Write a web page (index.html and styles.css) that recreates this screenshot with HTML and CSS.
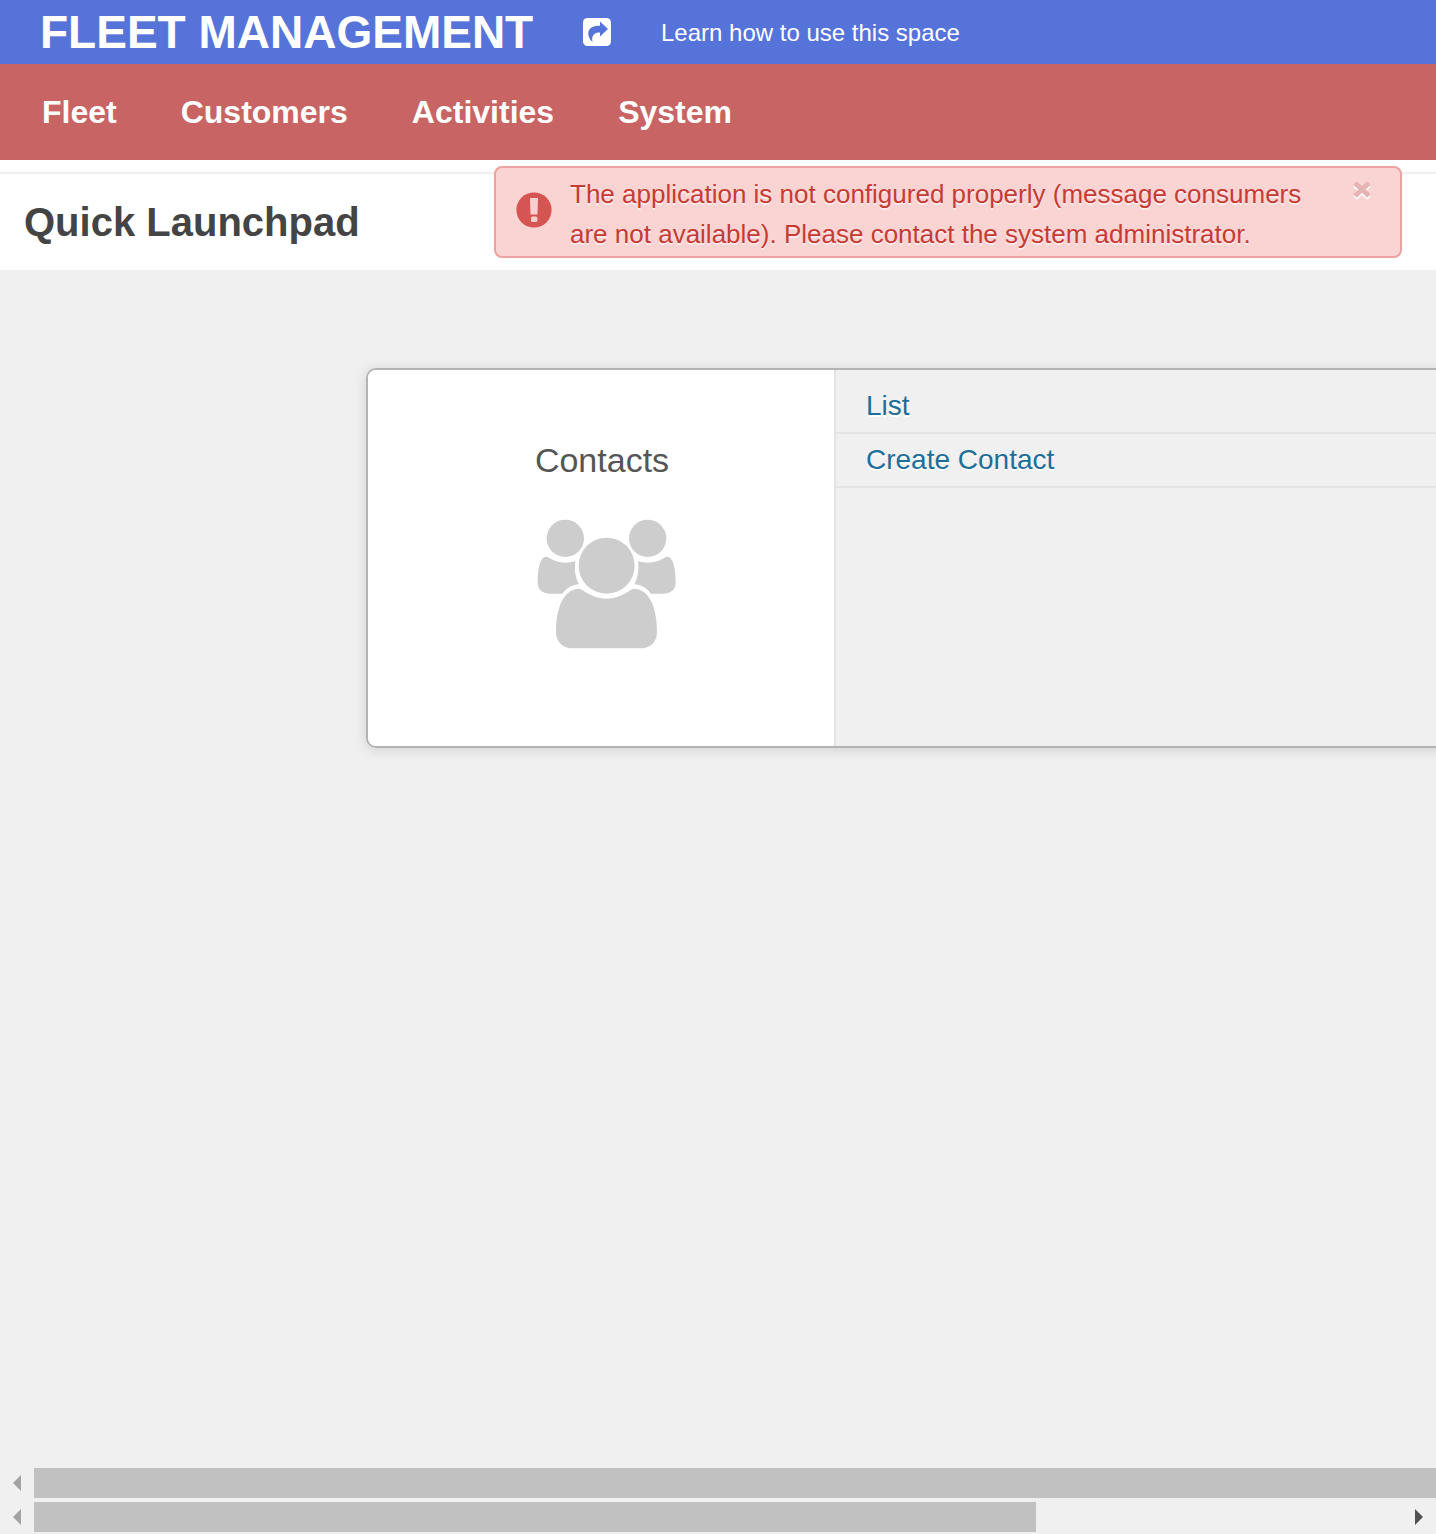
FILE: index.html
```
<!DOCTYPE html>
<html lang="en">
<head>
<meta charset="utf-8">
<title>Fleet Management</title>
<link rel="stylesheet" href="styles.css">
</head>
<body>
<div class="page">
  <header class="topbar">
    <h1 class="brand">FLEET MANAGEMENT</h1>
    <svg class="share" viewBox="0 0 28 28" aria-hidden="true">
      <rect width="28" height="28" rx="4.6" fill="#fff"/>
      <path d="M17 3.500 25 11 17 18.500V14.400C11.500 14.300 8.200 16.800 9.500 24.300 5.800 20.800 4.600 16.800 5.500 13.500 7 9.200 11 7.800 17 7.800Z" fill="#5673da"/>
    </svg>
    <a class="learn">Learn how to use this space</a>
  </header>
  <nav class="menu">
    <a>Fleet</a><a>Customers</a><a>Activities</a><a>System</a>
  </nav>
  <div class="heading">
    <h2>Quick Launchpad</h2>
    <div class="alert" role="alert">
      <svg class="alert-icon" viewBox="0 0 36 36" aria-hidden="true">
        <circle cx="18" cy="18" r="17.6" fill="#d55553"/>
        <path d="M14 6H22L21.500 22.500H14.500Z" fill="#f8cfce"/>
        <rect x="15" y="24.500" width="6.400" height="5.500" rx="1.500" fill="#f8cfce"/>
      </svg>
      <p>The application is not configured properly (message consumers are not available). Please contact the system administrator.</p>
      <svg class="close" viewBox="0 0 20 20" aria-hidden="true">
        <path d="M3 5 17 18M17 5 3 18" stroke="#fff" stroke-width="5"/>
        <path d="M3 3 17 16M17 3 3 16" stroke="#e6b4b4" stroke-width="5"/>
      </svg>
    </div>
  </div>
  <main class="content">
    <section class="card">
      <div class="card-title">
        <h3>Contacts</h3>
        <svg class="people" viewBox="81 267 417 390" fill="#cdcdcd" aria-hidden="true">
          <circle cx="166" cy="325" r="56"/>
          <circle cx="413" cy="325" r="56"/>
          <circle cx="290" cy="407" r="84"/>
          <path d="M108 380C91 380 83 415 83 457 83 479 96 491 122 491H157C169 475 184 465 207 463 196 443 193 421 196 393 170 401 143 400 118 384Q112 380 108 380Z"/>
          <path d="M472 380C489 380 497 415 497 457 497 479 484 491 458 491H423C411 475 396 465 373 463 384 443 387 421 384 393 410 401 437 400 462 384Q468 380 472 380Z"/>
          <path d="M208 476C160 476 138 535 138 605 138 636 158 655 190 655H390C422 655 441 636 441 605 441 535 419 476 371 476 362 476 335 506 290 506 245 506 217 476 208 476Z"/>
        </svg>
      </div>
      <ul class="links">
        <li><a>List</a></li>
        <li><a>Create Contact</a></li>
      </ul>
    </section>
  </main>
  <div class="scrollbar">
    <svg class="arrow" viewBox="0 0 34 32"><path d="M21 7V23L13 15Z" fill="#a3a3a3"/></svg>
    <div class="thumb"></div>
  </div>
  <div class="scrollbar">
    <svg class="arrow" viewBox="0 0 34 32"><path d="M21 7V23L13 15Z" fill="#a3a3a3"/></svg>
    <div class="thumb thumb-short"></div>
    <svg class="arrow arrow-end" viewBox="0 0 34 32"><path d="M13 7V23L21 15Z" fill="#505050"/></svg>
  </div>
</div>
</body>
</html>
```
FILE: styles.css
```
* { box-sizing: border-box; }
body { margin: 0; font-family: "Liberation Sans", Arial, sans-serif; background: #f0f0f0; }
h1, h2, h3, p, ul { margin: 0; padding: 0; }
.page { display: flex; flex-direction: column; height: 1534px; overflow: hidden; }
.topbar { display: flex; align-items: center; height: 64px; padding-left: 40px; background: #5673da; color: #fff; }
.brand { font-size: 46px; line-height: 64px; white-space: nowrap; width: 543px; }
.share { width: 28px; height: 28px; margin-right: 50px; }
.learn { padding-top: 2px; font-size: 24px; line-height: 64px; white-space: nowrap; }
.menu { display: flex; gap: 64px; height: 96px; padding-left: 42px; background: #c86464; color: #fff; font-size: 32px; font-weight: bold; line-height: 96px; }
.heading { position: relative; height: 110px; padding: 12px 0 0; background: #fff; }
.heading h2 { border-top: 2px solid #f0f0f0; padding-left: 24px; color: #444; font-size: 40px; line-height: 96px; }
.alert { position: absolute; left: 494px; top: 6px; display: flex; width: 908px; height: 92px; padding: 6px 28px 0 20px; border: 2px solid #eda2a2; border-radius: 8px; background: rgba(250, 209, 208, .94); color: #c43c35; text-shadow: 0 2px 0 rgba(255, 255, 255, .5); }
.alert-icon { width: 36px; height: 36px; margin: 18px 18px 0 0; }
.alert p { width: 760px; font-size: 26px; line-height: 40px; }
.close { width: 20px; height: 20px; margin: 6px 0 0 auto; }
.content { flex: 1; overflow: hidden; padding: 98px 0 0 366px; }
.card { display: flex; width: 1120px; height: 380px; border: 2px solid #b3b3b3; border-radius: 10px; box-shadow: 0 2px 14px rgba(0, 0, 0, .13); overflow: hidden; }
.card-title { display: flex; flex-direction: column; align-items: center; width: 468px; padding-top: 69px; background: #fff; border-right: 2px solid #e4e4e4; }
.card-title h3 { padding-left: 2px; color: #555; font-size: 34px; font-weight: normal; line-height: 42px; }
.people { width: 139px; height: 130px; margin: 38px 0 0 10px; }
.links { flex: 1; padding-top: 10px; list-style: none; background: #f0f0f0; }
.links li { height: 54px; padding-left: 30px; border-bottom: 2px solid #e4e4e4; color: #1e6e99; font-size: 28px; line-height: 52px; text-shadow: 0 2px 0 #fff; }
.scrollbar { display: flex; height: 34px; padding-top: 2px; background: #f0f0f0; }
.arrow { width: 34px; height: 32px; }
.thumb { flex: 1; height: 30px; background: #c1c1c1; }
.thumb-short { flex: none; width: 1002px; }
.arrow-end { margin-left: auto; }
```
